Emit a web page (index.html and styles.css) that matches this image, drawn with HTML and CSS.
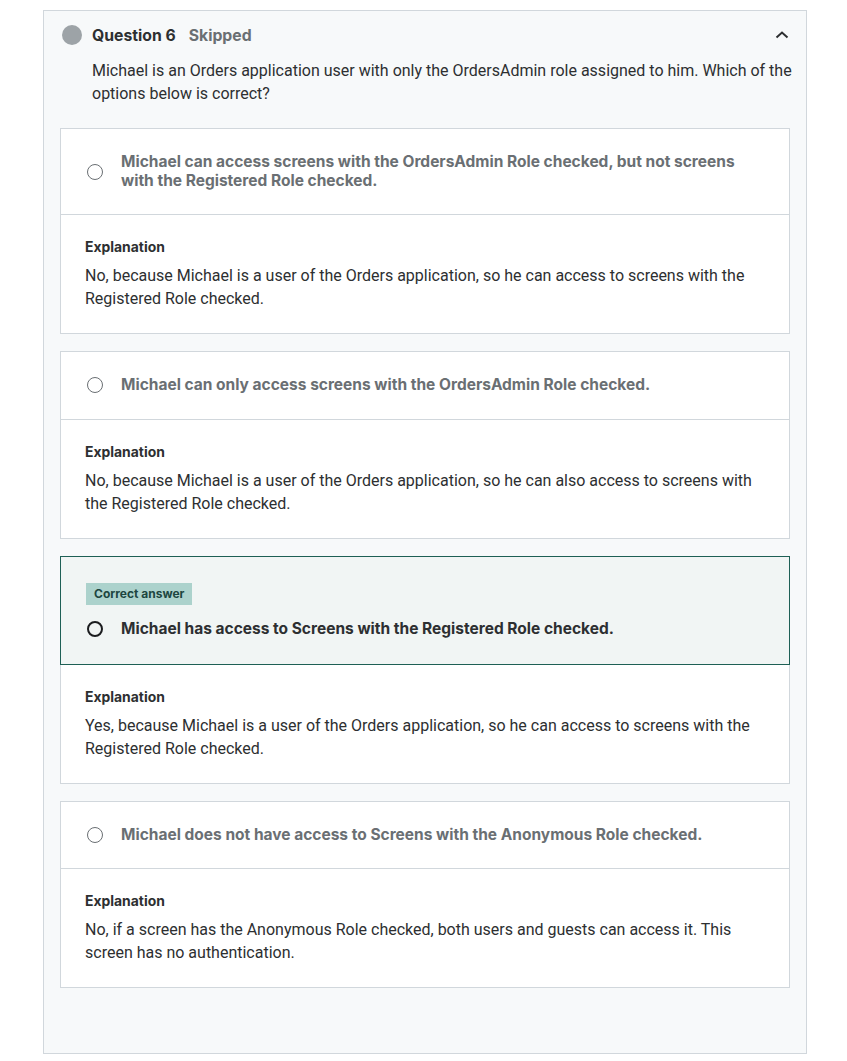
FILE: index.html
```html
<!DOCTYPE html>
<html lang="en">
<head>
<meta charset="utf-8">
<title>Question 6</title>
<link rel="stylesheet" href="styles.css">
</head>
<body>
<div class="panel">
  <div class="q-header">
    <span class="q-dot"></span>
    <span class="q-title">Question 6</span>
    <span class="q-status">Skipped</span>
    <svg class="q-chevron" width="14" height="10" viewBox="0 0 14 10"><path d="M1.5 7.5 L7 2.5 L12.5 7.5" fill="none" stroke="#2d2f31" stroke-width="2"/></svg>
  </div>
  <p class="q-text">Michael is an Orders application user with only the OrdersAdmin role assigned to him. Which of the options below is correct?</p>

  <div class="answers">
    <div class="card">
      <div class="opt">
        <span class="radio"></span>
        <span class="opt-text">Michael can access screens with the OrdersAdmin Role checked, but not screens with the Registered Role checked.</span>
      </div>
      <div class="expl">
        <div class="expl-title">Explanation</div>
        <div class="expl-text">No, because Michael is a user of the Orders application, so he can access to screens with the Registered Role checked.</div>
      </div>
    </div>

    <div class="card">
      <div class="opt">
        <span class="radio"></span>
        <span class="opt-text">Michael can only access screens with the OrdersAdmin Role checked.</span>
      </div>
      <div class="expl">
        <div class="expl-title">Explanation</div>
        <div class="expl-text">No, because Michael is a user of the Orders application, so he can also access to screens with the Registered Role checked.</div>
      </div>
    </div>

    <div class="card">
      <div class="opt opt-correct">
        <span class="badge">Correct answer</span>
        <div class="opt-row">
          <span class="radio radio-dark"></span>
          <span class="opt-text opt-text-dark">Michael has access to Screens with the Registered Role checked.</span>
        </div>
      </div>
      <div class="expl">
        <div class="expl-title">Explanation</div>
        <div class="expl-text">Yes, because Michael is a user of the Orders application, so he can access to screens with the Registered Role checked.</div>
      </div>
    </div>

    <div class="card">
      <div class="opt">
        <span class="radio"></span>
        <span class="opt-text">Michael does not have access to Screens with the Anonymous Role checked.</span>
      </div>
      <div class="expl">
        <div class="expl-title">Explanation</div>
        <div class="expl-text">No, if a screen has the Anonymous Role checked, both users and guests can access it. This screen has no authentication.</div>
      </div>
    </div>
  </div>
</div>
</body>
</html>
```

FILE: styles.css
```css
* { box-sizing: border-box; }
html, body { margin: 0; padding: 0; background: #ffffff; }
body {
  font-family: "Roboto", "Liberation Sans", sans-serif;
  color: #2d2f31;
}
.panel {
  margin: 10px 0 0 43px;
  width: 764px;
  height: 1044px;
  background: #f7f9fa;
  border: 1px solid #d1d7dc;
  padding: 13px 16px 0 16px;
}
.q-header {
  display: flex;
  align-items: center;
  height: 22px;
  padding-left: 2px;
}
.q-dot {
  width: 20px;
  height: 20px;
  border-radius: 50%;
  background: #9da3a7;
  margin-right: 10px;
  flex: none;
}
.q-title {
  font-family: "Inter", "Roboto", sans-serif;
  font-weight: 700;
  font-size: 15.75px;
  margin-right: 13px;
}
.q-status {
  font-family: "Inter", "Roboto", sans-serif;
  font-weight: 700;
  font-size: 15.75px;
  color: #6a6f73;
}
.q-chevron {
  margin-left: auto;
  margin-right: 1px;
}
.q-text {
  margin: 13px 0 0 32px;
  width: 705px;
  font-size: 16px;
  line-height: 23px;
}
.answers {
  margin-top: 23px;
  display: flex;
  flex-direction: column;
  gap: 17px;
}
.card {
  background: #ffffff;
  border: 1px solid #d1d7dc;
}
.opt {
  display: flex;
  align-items: center;
  padding: 24px 24px 24px 26px;
  border-bottom: 1px solid #d1d7dc;
}
.opt-correct {
  display: block;
  background: #f1f5f4;
  border: 1px solid #1e6055;
  margin: -1px -1px 0 -1px;
  padding: 26px 24px 25px 25px;
}
.opt-row {
  display: flex;
  align-items: center;
  margin-top: 15.5px;
  padding-left: 1px;
}
.badge {
  display: inline-block;
  background: #acd2cc;
  color: #1d4640;
  font-family: "Inter", "Roboto", sans-serif;
  font-size: 12px;
  font-weight: 700;
  line-height: 22px;
  padding: 0 8px;
}
.radio {
  width: 16px;
  height: 16px;
  border-radius: 50%;
  border: 1.5px solid #6a6f73;
  flex: none;
  margin-right: 18px;
}
.radio-dark {
  border: 2px solid #1c1d1f;
}
.opt-text {
  font-family: "Inter", "Roboto", sans-serif;
  font-size: 15.5px;
  font-weight: 700;
  line-height: 18.5px;
  color: #6a6f73;
}
.opt-text-dark {
  color: #2d2f31;
}
.expl {
  padding: 23px 24px 23px 24px;
}
.expl-title {
  font-family: "Inter", "Roboto", sans-serif;
  font-size: 13.9px;
  font-weight: 700;
  line-height: 19px;
}
.expl-text {
  margin-top: 7px;
  font-size: 16px;
  line-height: 23px;
}
```
